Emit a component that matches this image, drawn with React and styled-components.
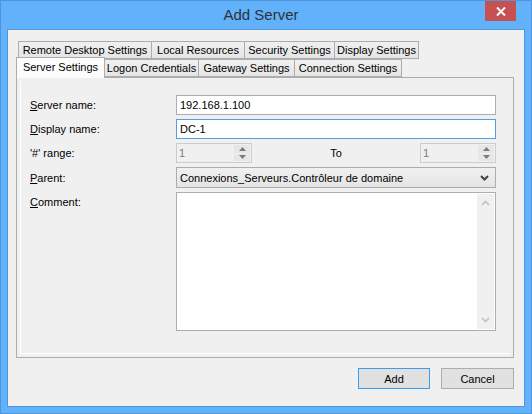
import React from "react";
import styled, { createGlobalStyle } from "styled-components";

const Global = createGlobalStyle`
  body {
    margin: 0;
    font-family: "Liberation Sans", Arial, sans-serif;
    font-size: 11px;
    color: #000;
  }
  * { box-sizing: border-box; }
`;

const Window = styled.div`
  width: 532px;
  height: 414px;
  background: #62b1fb;
  border: 1px solid #4d96de;
  display: flex;
  flex-direction: column;
`;

const TitleBar = styled.div`
  height: 28px;
  display: grid;
  grid-template-columns: 1fr auto 1fr;
  align-items: start;
`;

const Title = styled.div`
  grid-column: 2;
  font-size: 15px;
  color: #2e3238;
  padding: 5px 10px 0 0;
`;

const Close = styled.div`
  grid-column: 3;
  justify-self: end;
  width: 31px;
  height: 20px;
  margin-right: 15px;
  background: #c75050;
  display: flex;
  align-items: center;
  justify-content: center;
`;

const Client = styled.div`
  flex: 1;
  margin: 0 6px 6px;
  border: 1px solid #4f97db;
  background: #f0f0f0;
  padding: 11px 10px 0 8px;
  display: flex;
  flex-direction: column;
`;

const TabRow = styled.div`
  display: flex;
  height: 18px;
  margin-left: ${(p) => p.$indent}px;
  align-items: flex-end;
`;

const Tab = styled.div`
  width: ${(p) => p.$w}px;
  height: ${(p) => (p.$active ? 21 : 18)}px;
  margin-left: -1px;
  &:first-child { margin-left: 0; }
  border: 1px solid #acacac;
  border-bottom: ${(p) => (p.$active ? "none" : "1px solid #acacac")};
  background: ${(p) =>
    p.$active ? "#fcfcfc" : "linear-gradient(#f0f0f0, #e5e5e5)"};
  display: flex;
  align-items: center;
  justify-content: center;
  padding-bottom: ${(p) => (p.$active ? 3 : 0)}px;
  position: relative;
  top: ${(p) => (p.$active ? 1 : 0)}px;
  z-index: ${(p) => (p.$active ? 2 : 1)};
  white-space: nowrap;
`;

const Panel = styled.div`
  height: 281px;
  border: 1px solid #acacac;
  padding: 3px;
  display: flex;
`;

const Inner = styled.div`
  flex: 1;
  border-left: 1px solid #ffffff;
  border-bottom: 1px solid #ffffff;
  padding: 14px 0 0 9px;
`;

const Form = styled.div`
  display: grid;
  grid-template-columns: 146px 320px;
  grid-template-rows: 20px 20px 20px 21px 139px;
  row-gap: 4px;
`;

const Label = styled.div`
  display: flex;
  align-items: ${(p) => (p.$top ? "flex-start" : "center")};
  padding-top: ${(p) => (p.$top ? 4 : 0)}px;
`;

const TextBox = styled.div`
  border: 1px solid ${(p) => (p.$focus ? "#569de5" : "#abadb3")};
  background: #fff;
  display: flex;
  align-items: center;
  padding-left: 3px;
`;

const RangeRow = styled.div`
  display: flex;
  justify-content: space-between;
  align-items: center;
`;

const Spin = styled.div`
  width: 76px;
  height: 20px;
  border: 1px solid #cccccc;
  background: #f0f0f0;
  display: flex;
  color: #7a7a7a;
`;

const SpinValue = styled.div`
  flex: 1;
  padding: 3px 0 0 2px;
`;

const SpinButtons = styled.div`
  width: 16px;
  margin: 1px;
  display: flex;
  flex-direction: column;
  gap: 1px;
`;

const SpinHalf = styled.div`
  flex: 1;
  background: #e6e6e6;
  display: flex;
  align-items: center;
  justify-content: center;
`;

const Combo = styled.div`
  border: 1px solid #acacac;
  background: linear-gradient(#f0f0f0, #e5e5e5);
  display: flex;
  align-items: center;
  justify-content: space-between;
  padding: 0 6px 0 3px;
`;

const Memo = styled.div`
  border: 1px solid #abadb3;
  background: #fff;
  display: flex;
  justify-content: flex-end;
  padding: 1px;
`;

const ScrollBar = styled.div`
  width: 17px;
  background: #f0f0f0;
  display: flex;
  flex-direction: column;
  justify-content: space-between;
  align-items: center;
  padding: 6px 0;
`;

const ButtonRow = styled.div`
  display: flex;
  justify-content: flex-end;
  gap: 11px;
  margin-top: 10px;
`;

const Button = styled.div`
  width: ${(p) => p.$w}px;
  height: 21px;
  border: 1px solid ${(p) => (p.$default ? "#3c9af0" : "#adadad")};
  background: #e1e1e1;
  display: flex;
  align-items: center;
  justify-content: center;
`;

const Arrow = ({ up, color = "#7a7a7a", w = 7, h = 4 }) => (
  <svg width={w} height={h} viewBox="0 0 7 4">
    <path d={up ? "M0 4 L3.5 0 L7 4 Z" : "M0 0 L3.5 4 L7 0 Z"} fill={color} />
  </svg>
);

const Chevron = ({ up, color, sw = 2 }) => (
  <svg width="9" height="6" viewBox="0 0 9 6">
    <polyline
      points={up ? "1,5 4.5,1.5 8,5" : "1,1 4.5,4.5 8,1"}
      fill="none"
      stroke={color}
      strokeWidth={sw}
    />
  </svg>
);

const SpinBox = () => (
  <Spin>
    <SpinValue>1</SpinValue>
    <SpinButtons>
      <SpinHalf><Arrow up /></SpinHalf>
      <SpinHalf><Arrow /></SpinHalf>
    </SpinButtons>
  </Spin>
);

const App = () => {
  return (
    <Window>
      <Global />
      <TitleBar>
        <Title>Add Server</Title>
        <Close>
          <svg width="10" height="9" viewBox="0 0 10 9">
            <path d="M1 0.5 L9 8.5 M9 0.5 L1 8.5" stroke="#fff" strokeWidth="2" />
          </svg>
        </Close>
      </TitleBar>
      <Client>
        <TabRow $indent={2}>
          <Tab $w={134}>Remote Desktop Settings</Tab>
          <Tab $w={94}>Local Resources</Tab>
          <Tab $w={91}>Security Settings</Tab>
          <Tab $w={85}>Display Settings</Tab>
        </TabRow>
        <TabRow $indent={0}>
          <Tab $w={89} $active>Server Settings</Tab>
          <Tab $w={95}>Logon Credentials</Tab>
          <Tab $w={97}>Gateway Settings</Tab>
          <Tab $w={108}>Connection Settings</Tab>
        </TabRow>
        <Panel>
          <Inner>
            <Form>
              <Label><span><u>S</u>erver name:</span></Label>
              <TextBox>192.168.1.100</TextBox>
              <Label><span><u>D</u>isplay name:</span></Label>
              <TextBox $focus>DC-1</TextBox>
              <Label>'#' range:</Label>
              <RangeRow>
                <SpinBox />
                <span>To</span>
                <SpinBox />
              </RangeRow>
              <Label><span><u>P</u>arent:</span></Label>
              <Combo>
                <span>Connexions_Serveurs.Contrôleur de domaine</span>
                <Chevron color="#444" />
              </Combo>
              <Label $top><span><u>C</u>omment:</span></Label>
              <Memo>
                <ScrollBar>
                  <Chevron up color="#c2c2c2" sw={1.6} />
                  <Chevron color="#c2c2c2" sw={1.6} />
                </ScrollBar>
              </Memo>
            </Form>
          </Inner>
        </Panel>
        <ButtonRow>
          <Button $w={72} $default>Add</Button>
          <Button $w={73}>Cancel</Button>
        </ButtonRow>
      </Client>
    </Window>
  );
};

export default App;
